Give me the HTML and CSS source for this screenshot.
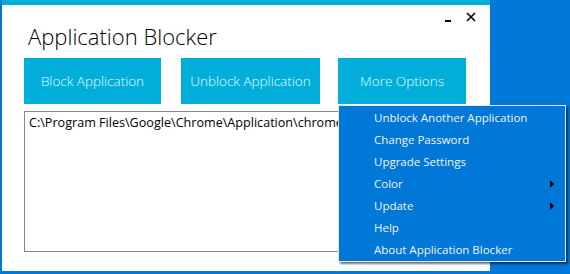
FILE: index.html
```html
<!DOCTYPE html>
<html>
<head>
<meta charset="utf-8">
<link rel="stylesheet" href="styles.css">
</head>
<body>
<div class="window">
  <div class="controls">
    <span class="min"></span>
    <svg class="close" width="10" height="10" viewBox="0 0 10 10"><path d="M1 1 L9 9 M9 1 L1 9" stroke="#000" stroke-width="1.6" fill="none"/></svg>
  </div>
  <h1 class="title">Application Blocker</h1>
  <div class="buttons">
    <div class="btn btn-block">Block Application</div>
    <div class="btn btn-unblock">Unblock Application</div>
    <div class="btn btn-more">More Options</div>
  </div>
  <div class="textbox">C:\Program Files\Google\Chrome\Application\chrome.exe</div>
  <div class="menu">
    <div class="item">Unblock Another Application</div>
    <div class="item">Change Password</div>
    <div class="item">Upgrade Settings</div>
    <div class="item sub">Color<span class="arrow"></span></div>
    <div class="item sub">Update<span class="arrow"></span></div>
    <div class="item">Help</div>
    <div class="item">About Application Blocker</div>
  </div>
</div>
</body>
</html>
```
FILE: styles.css
```css
html, body {
  margin: 0;
  padding: 0;
}
body {
  width: 570px;
  height: 274px;
  overflow: hidden;
  background: #0078d7;
  font-family: "Open Sans", "Noto Sans", sans-serif;
}
.window {
  position: relative;
  margin-left: 2px;
  width: 488px;
  height: 271px;
  box-sizing: border-box;
  background: #fff;
  border-top: 5px solid #00aed8;
  padding: 0 0 0 22px;
}
.controls {
  position: absolute;
  top: 7px;
  left: 443px;
  display: flex;
  align-items: center;
  gap: 15px;
  height: 10px;
}
.min {
  display: block;
  width: 6px;
  height: 2px;
  background: #000;
  margin-top: 7px;
}
.close {
  display: block;
}
.title {
  margin: 0;
  padding: 16px 0 0 4px;
  height: 37px;
  box-sizing: content-box;
  font-weight: 300;
  font-size: 22px;
  line-height: 30px;
  color: #000;
}
.buttons {
  display: flex;
  height: 46px;
}
.btn {
  background: #00afd9;
  color: #eafaff;
  font-weight: 300;
  font-size: 13.5px;
  display: flex;
  align-items: center;
  justify-content: center;
}
.btn-block { width: 137px; }
.btn-unblock { width: 139px; margin-left: 20px; }
.btn-more { width: 128px; margin-left: 18px; }
.textbox {
  margin-top: 7px;
  width: 442px;
  height: 141px;
  box-sizing: border-box;
  border: 1px solid #828790;
  font-size: 12.6px;
  line-height: 20px;
  padding: 1px 0 0 4px;
  color: #000;
  white-space: nowrap;
  overflow: hidden;
}
.menu {
  position: absolute;
  left: 336px;
  top: 100px;
  width: 228px;
  height: 157px;
  box-sizing: border-box;
  background: #0078d7;
  border: 1px solid #e6e6e6;
  box-shadow: 2px 2px 2px rgba(0,0,0,0.55);
  padding: 1px 0 0 0;
}
.item {
  position: relative;
  height: 22px;
  line-height: 22px;
  padding-left: 35px;
  color: #f2f2f2;
  font-size: 11.5px;
}
.arrow {
  position: absolute;
  right: 11px;
  top: 7px;
  width: 0;
  height: 0;
  border-left: 4px solid #000;
  border-top: 4px solid transparent;
  border-bottom: 4px solid transparent;
}
```
